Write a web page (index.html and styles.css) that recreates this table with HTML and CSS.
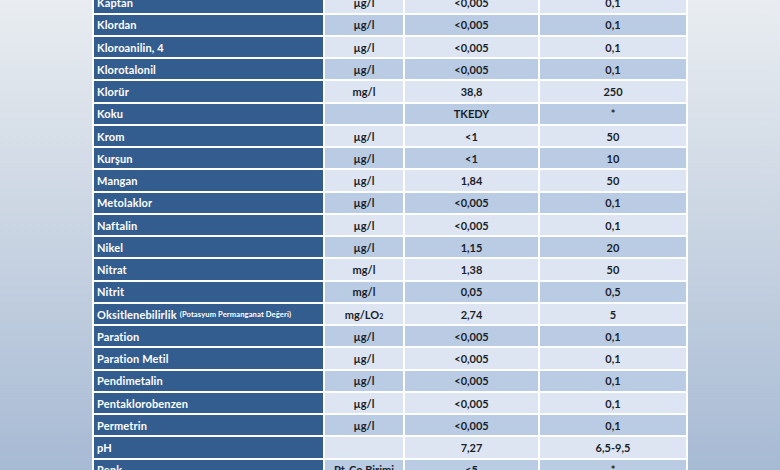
FILE: index.html
```html
<!DOCTYPE html>
<html lang="tr">
<head>
<meta charset="utf-8">
<title>Su Analiz Tablosu</title>
<link rel="stylesheet" href="styles.css">
</head>
<body>
<div class="page">
  <div class="grid">
    <div class="name">Kaptan</div><div class="c a">µg/l</div><div class="c a">&lt;0,005</div><div class="c a">0,1</div>
    <div class="name">Klordan</div><div class="c b">µg/l</div><div class="c b">&lt;0,005</div><div class="c b">0,1</div>
    <div class="name">Kloroanilin, 4</div><div class="c a">µg/l</div><div class="c a">&lt;0,005</div><div class="c a">0,1</div>
    <div class="name">Klorotalonil</div><div class="c b">µg/l</div><div class="c b">&lt;0,005</div><div class="c b">0,1</div>
    <div class="name">Klorür</div><div class="c a">mg/l</div><div class="c a">38,8</div><div class="c a">250</div>
    <div class="name">Koku</div><div class="c b"></div><div class="c b">TKEDY</div><div class="c b">*</div>
    <div class="name">Krom</div><div class="c a">µg/l</div><div class="c a">&lt;1</div><div class="c a">50</div>
    <div class="name">Kurşun</div><div class="c b">µg/l</div><div class="c b">&lt;1</div><div class="c b">10</div>
    <div class="name">Mangan</div><div class="c a">µg/l</div><div class="c a">1,84</div><div class="c a">50</div>
    <div class="name">Metolaklor</div><div class="c b">µg/l</div><div class="c b">&lt;0,005</div><div class="c b">0,1</div>
    <div class="name">Naftalin</div><div class="c a">µg/l</div><div class="c a">&lt;0,005</div><div class="c a">0,1</div>
    <div class="name">Nikel</div><div class="c b">µg/l</div><div class="c b">1,15</div><div class="c b">20</div>
    <div class="name">Nitrat</div><div class="c a">mg/l</div><div class="c a">1,38</div><div class="c a">50</div>
    <div class="name">Nitrit</div><div class="c b">mg/l</div><div class="c b">0,05</div><div class="c b">0,5</div>
    <div class="name">Oksitlenebilirlik <span class="small">(Potasyum Permanganat Değeri)</span></div><div class="c a">mg/LO<sub>2</sub></div><div class="c a">2,74</div><div class="c a">5</div>
    <div class="name">Paration</div><div class="c b">µg/l</div><div class="c b">&lt;0,005</div><div class="c b">0,1</div>
    <div class="name">Paration Metil</div><div class="c a">µg/l</div><div class="c a">&lt;0,005</div><div class="c a">0,1</div>
    <div class="name">Pendimetalin</div><div class="c b">µg/l</div><div class="c b">&lt;0,005</div><div class="c b">0,1</div>
    <div class="name">Pentaklorobenzen</div><div class="c a">µg/l</div><div class="c a">&lt;0,005</div><div class="c a">0,1</div>
    <div class="name">Permetrin</div><div class="c b">µg/l</div><div class="c b">&lt;0,005</div><div class="c b">0,1</div>
    <div class="name">pH</div><div class="c a"></div><div class="c a">7,27</div><div class="c a">6,5-9,5</div>
    <div class="name">Renk</div><div class="c b">Pt-Co Birimi</div><div class="c b">&lt;5</div><div class="c b">*</div>
  </div>
</div>
</body>
</html>
```
FILE: styles.css
```css
html, body {
  margin: 0;
  padding: 0;
}
body {
  width: 780px;
  height: 470px;
  overflow: hidden;
  background: linear-gradient(to bottom, #e9edf1 0%, #c9d4e2 50%, #a7bad4 100%);
  font-family: Lato, "Open Sans", sans-serif;
  font-weight: 700;
}
.page {
  padding-left: 92px;
}
.grid {
  display: grid;
  grid-template-columns: 229px 78px 133px 146px;
  grid-auto-rows: 20.26px;
  gap: 2px;
  padding: 2px;
  width: 592px;
  margin-top: -9.56px;
  background: #ffffff;
}
.name {
  background: #345d8f;
  color: #ffffff;
  font-size: 11px;
  display: flex;
  align-items: center;
  padding-left: 3px;
  white-space: nowrap;
  letter-spacing: 0.15px;
}
.small {
  font-size: 7.6px;
  margin-left: 3px;
  letter-spacing: 0.1px;
}
.c {
  display: flex;
  align-items: center;
  justify-content: center;
  color: #1b1f2a;
  font-size: 11px;
  white-space: nowrap;
}
.a {
  background: #dce5f1;
}
.b {
  background: #b9cce4;
}
sub {
  font-size: 7px;
  line-height: 0;
  position: relative;
  top: 2px;
  vertical-align: baseline;
}
```
